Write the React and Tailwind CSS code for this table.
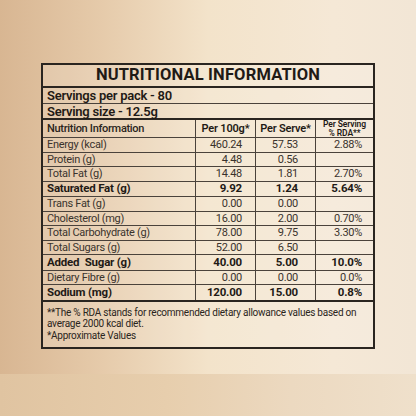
import React from "react";

const rows = [
  ["Energy (kcal)", "460.24", "57.53", "2.88%", false],
  ["Protein (g)", "4.48", "0.56", "", false],
  ["Total Fat (g)", "14.48", "1.81", "2.70%", false],
  ["Saturated Fat (g)", "9.92", "1.24", "5.64%", true],
  ["Trans Fat (g)", "0.00", "0.00", "", false],
  ["Cholesterol (mg)", "16.00", "2.00", "0.70%", false],
  ["Total Carbohydrate (g)", "78.00", "9.75", "3.30%", false],
  ["Total Sugars (g)", "52.00", "6.50", "", false],
  ["Added\u00a0 Sugar (g)", "40.00", "5.00", "10.0%", true],
  ["Dietary Fibre (g)", "0.00", "0.00", "0.0%", false],
  ["Sodium (mg)", "120.00", "15.00", "0.8%", true],
];

function Row({ r, last }) {
  const [label, a, b, c, bold] = r;
  const h = bold ? "h-[14.5px]" : "h-[13.5px]";
  const border = last ? "border-b-2 border-[#2a2520]" : "border-b border-[#4a423b]";
  const weight = bold
    ? "font-bold text-[#1f1a16] text-[11.5px] tracking-[-0.2px]"
    : "font-normal text-[#3a332d] text-[11px] tracking-[-0.3px]";
  return (
    <div className={`grid grid-cols-[153px_60px_60px_1fr] ${border}`}>
      <div className={`${h} ${weight} pl-[4px] flex items-center border-r border-[#4a423b] leading-none whitespace-pre`}>{label}</div>
      <div className={`${h} ${weight} pr-[13px] flex items-center justify-end border-r border-[#4a423b] leading-none`}>{a}</div>
      <div className={`${h} ${weight} pr-[17px] flex items-center justify-end border-r border-[#4a423b] leading-none`}>{b}</div>
      <div className={`${h} ${weight} pr-[11px] flex items-center justify-end leading-none`}>{c}</div>
    </div>
  );
}

export default function App() {
  return (
    <div
      className="w-[416px] h-[416px] flex flex-col overflow-hidden bg-[linear-gradient(90deg,#d8b692_0%,#e6cbab_25%,#f3e3ca_50%,#f5e8d6_80%,#f2e6d6_100%)]"
      style={{ fontFamily: "Roboto, 'Noto Sans', sans-serif" }}
    >
      <div className="mt-[63px] ml-[41px] w-[334px] border-2 border-[#2a2520] bg-white/15 text-[#2a2520]">
        <div className="h-[23px] flex items-center justify-center border-b-2 border-[#2a2520] text-[16.5px] font-bold tracking-[0.01em] text-[#1f1a16] leading-none">
          NUTRITIONAL INFORMATION
        </div>
        <div className="h-[16px] flex items-center pl-[4px] border-b border-[#4a423b] text-[13px] font-semibold tracking-[-0.25px] leading-none text-[#1f1a16]">
          Servings per pack - 80
        </div>
        <div className="h-[16px] flex items-center pl-[4px] border-b-2 border-[#2a2520] text-[13px] font-semibold tracking-[-0.25px] leading-none text-[#1f1a16]">
          Serving size - 12.5g
        </div>
        <div className="grid grid-cols-[153px_60px_60px_1fr] border-b border-[#4a423b]">
          <div className="h-[17px] pl-[4px] flex items-center border-r border-[#4a423b] text-[11px] font-medium tracking-[-0.3px] leading-none text-[#2a2520]">Nutrition Information</div>
          <div className="h-[17px] flex items-center justify-center border-r border-[#4a423b] text-[11px] font-semibold tracking-[-0.2px] leading-none text-[#1f1a16]">Per 100g*</div>
          <div className="h-[17px] flex items-center justify-center border-r border-[#4a423b] text-[11px] font-semibold tracking-[-0.2px] leading-none text-[#1f1a16]">Per Serve*</div>
          <div className="h-[17px] flex flex-col items-center justify-center text-[8.5px] font-semibold tracking-[-0.1px] leading-[8.5px] text-[#1f1a16]">
            <span>Per Serving</span>
            <span>% RDA**</span>
          </div>
        </div>
        {rows.map((r, i) => (
          <Row key={i} r={r} last={i === rows.length - 1} />
        ))}
        <div className="h-[45px] pt-[5px] pl-[4px] pr-[2px] text-[10px] tracking-[-0.25px] leading-[11.7px] text-[#2a2520] whitespace-nowrap">
          <div>**The % RDA stands for recommended dietary allowance values based on</div>
          <div>average 2000 kcal diet.</div>
          <div>*Approximate Values</div>
        </div>
      </div>
      <div className="mt-auto h-[42px] bg-[linear-gradient(90deg,#e0c4a1_0%,#e7cead_40%,#ecd9c0_70%,#efe0cb_100%)]" />
    </div>
  );
}
